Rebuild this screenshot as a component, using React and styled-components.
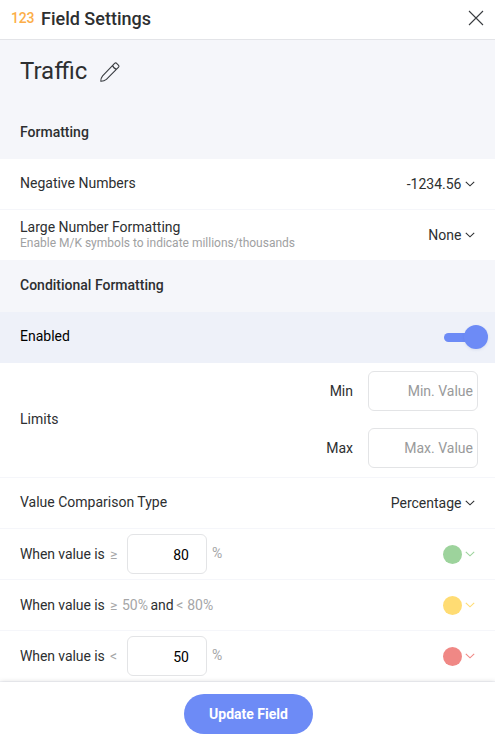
import React from "react";
import styled, { createGlobalStyle } from "styled-components";

const Global = createGlobalStyle`
  * { box-sizing: border-box; }
  body { margin: 0; background: #fff; }
  input, button { font: inherit; letter-spacing: inherit; }
`;
const Panel = styled.main`
  width: 495px;
  height: 744px;
  display: flex;
  flex-direction: column;
  overflow: hidden;
  background: #fff;
  color: #2d2f31;
  font: 400 14px/18px Roboto, sans-serif;
`;
const Header = styled.header`
  flex: none;
  height: 40px;
  padding: 0 10px 3px 11px;
  display: flex;
  align-items: center;
  border-bottom: 1px solid #e3e4e8;
`;
const TypeMark = styled.span`
  width: 30px;
  font-size: 14px;
  font-weight: 500;
  letter-spacing: -0.2px;
  color: #fcae48;
`;
const Heading = styled.h1`
  flex: 1;
  margin: 0;
  font-size: 18px;
  font-weight: 500;
  line-height: 25px;
`;
const IconButton = styled.button`
  display: flex;
  padding: 0;
  border: 0;
  background: none;
  color: #393c40;
`;
const TitleBar = styled.div`
  flex: none;
  height: 68px;
  padding: 0 20px 4px;
  display: flex;
  align-items: center;
  gap: 12px;
  background: #f5f6fa;
`;
const FieldName = styled.h2`
  margin: 0;
  padding-bottom: 2px;
  font-size: 24px;
  font-weight: 400;
  line-height: 32px;
`;
const Row = styled.section`
  flex: none;
  height: ${(p) => p.$height || 51}px;
  padding: 0 20px;
  display: flex;
  align-items: center;
  justify-content: space-between;
  background: ${(p) => p.$bg || "#fff"};
  border-bottom: 1px solid ${(p) => p.$line || "#f5f6fa"};
`;
const SectionTitle = styled.h3`
  margin: 0;
  padding-bottom: 2px;
  font-size: 14px;
  font-weight: 500;
`;
const Label = styled.div`
  padding-bottom: ${(p) => p.$lift ?? 2}px;
  color: ${(p) => p.$color || "inherit"};
`;
const LabelGroup = styled.div`
  padding-bottom: 2px;
`;
const Hint = styled.div`
  font-size: 12px;
  line-height: 14px;
  color: #a0a1a2;
`;
const Select = styled.button`
  display: flex;
  align-items: center;
  gap: 3.5px;
  padding: 0;
  border: 0;
  background: none;
  color: ${(p) => p.$color || "inherit"};
`;
const Toggle = styled.button`
  width: 44px;
  height: 24px;
  margin-right: -13px;
  padding: 0;
  border: 0;
  display: flex;
  align-items: center;
  background: none;
  &::before {
    content: "";
    width: 30px;
    height: 9px;
    border-radius: 5px;
    background: #6d8bf6;
  }
  &::after {
    content: "";
    flex: none;
    width: 24px;
    height: 24px;
    margin-left: -10px;
    border-radius: 50%;
    background: #6d8bf6;
    box-shadow: 0 1px 3px rgba(60, 80, 150, 0.12);
  }
`;
const Limits = styled.div`
  display: flex;
  flex-direction: column;
  gap: 17px;
  margin-right: -3px;
  padding-bottom: 2px;
`;
const LimitField = styled.label`
  display: flex;
  align-items: center;
  justify-content: flex-end;
  gap: 15px;
`;
const Input = styled.input`
  width: ${(p) => p.$width}px;
  height: 40px;
  padding: ${(p) => p.$pad};
  border: 1px solid #e3e4e6;
  border-radius: 6px;
  background: #fff;
  color: #000;
  text-align: right;
  outline: none;
  &::placeholder { color: #999a9b; opacity: 1; }
`;
const Condition = styled.div`
  display: flex;
  align-items: center;
`;
const Subject = styled.span`
  width: 90px;
  letter-spacing: -0.08px;
`;
const Joiner = styled.span`
  margin: 0 2.5px;
`;
const Sign = styled.span`
  width: ${(p) => p.$width}px;
  color: #a5a6a7;
`;
const Muted = styled.span`
  margin-left: ${(p) => p.$left || 0}px;
  padding-bottom: ${(p) => p.$lift || 0}px;
  color: #a5a6a7;
`;
const Swatch = styled.span`
  width: 19px;
  height: 19px;
  border-radius: 50%;
  background: currentColor;
`;
const Footer = styled.footer`
  flex: none;
  position: relative;
  height: 62px;
  padding-top: 12px;
  display: flex;
  justify-content: center;
  align-items: flex-start;
  background: #fff;
  box-shadow: 0 0 5px rgba(0, 0, 0, 0.16);
`;
const Submit = styled.button`
  width: 129px;
  height: 40px;
  margin-left: 2px;
  padding: 0;
  border: 0;
  border-radius: 20px;
  background: #6d8bf6;
  color: #fff;
  font-weight: 700;
`;

const Chevron = () => (
  <svg width="10" height="6" viewBox="0 0 10 6" fill="none" stroke="currentColor" strokeWidth="1.1">
    <path d="M.8.8 5 4.8 9.2.8" />
  </svg>
);
const Close = () => (
  <svg width="18" height="18" viewBox="0 0 18 18" stroke="currentColor" strokeWidth="1.1">
    <path d="m2 2 14 14M16 2 2 16" />
  </svg>
);
const Pencil = () => (
  <svg width="22" height="22" viewBox="0 0 22 22" fill="none" stroke="#393c40" strokeWidth="1.1" strokeLinejoin="round" strokeLinecap="round">
    <path d="M1.8 20.3Q1.6 17.2 3.6 14.8L15.6 2.4Q16.6 1.5 17.6 2.3L19.6 4.3Q20.4 5.3 19.6 6.2L7.4 18.4Q5 20.4 1.8 20.3Z M13.7 4.4Q14.2 7.4 17.6 8.2" />
  </svg>
);

function Picker({ children, color }) {
  return (
    <Select $color={color}>
      {children}
      <Chevron />
    </Select>
  );
}

function ThresholdRow({ sign, value, color }) {
  return (
    <Row>
      <Condition>
        <Subject>When value is</Subject>
        <Sign $width={17}>{sign}</Sign>
        <Input $width={80} $pad="2px 17px 0 4px" defaultValue={value} />
        <Muted $left={5} $lift={2}>%</Muted>
      </Condition>
      <Picker color={color}><Swatch /></Picker>
    </Row>
  );
}

export default function App() {
  return (
    <Panel>
      <Global />
      <Header>
        <TypeMark>123</TypeMark>
        <Heading>Field Settings</Heading>
        <IconButton aria-label="Close"><Close /></IconButton>
      </Header>
      <TitleBar>
        <FieldName>Traffic</FieldName>
        <IconButton aria-label="Rename"><Pencil /></IconButton>
      </TitleBar>
      <Row $bg="#f5f6fa">
        <SectionTitle>Formatting</SectionTitle>
      </Row>
      <Row>
        <Label>Negative Numbers</Label>
        <Picker>-1234.56</Picker>
      </Row>
      <Row>
        <LabelGroup>
          <Label $lift={0}>Large Number Formatting</Label>
          <Hint>Enable M/K symbols to indicate millions/thousands</Hint>
        </LabelGroup>
        <Picker>None</Picker>
      </Row>
      <Row $bg="#f5f6fa">
        <SectionTitle>Conditional Formatting</SectionTitle>
      </Row>
      <Row $bg="#eef1f9" $line="#eef1f9">
        <Label $color="#000">Enabled</Label>
        <Toggle role="switch" aria-checked="true" aria-label="Enabled" />
      </Row>
      <Row $height={115}>
        <Label $lift={2}>Limits</Label>
        <Limits>
          <LimitField>Min<Input $width={110} $pad="0 4px" placeholder="Min. Value" /></LimitField>
          <LimitField>Max<Input $width={110} $pad="0 4px" placeholder="Max. Value" /></LimitField>
        </Limits>
      </Row>
      <Row>
        <Label>Value Comparison Type</Label>
        <Picker>Percentage</Picker>
      </Row>
      <ThresholdRow sign="≥" value="80" color="#9dd39c" />
      <Row>
        <Condition>
          <Subject>When value is</Subject>
          <Sign $width={12}>≥</Sign>
          <Muted>50%</Muted>
          <Joiner>and</Joiner>
          <Sign $width={11}>&lt;</Sign>
          <Muted>80%</Muted>
        </Condition>
        <Picker color="#ffdc73"><Swatch /></Picker>
      </Row>
      <ThresholdRow sign="<" value="50" color="#f08885" />
      <Footer>
        <Submit>Update Field</Submit>
      </Footer>
    </Panel>
  );
}
